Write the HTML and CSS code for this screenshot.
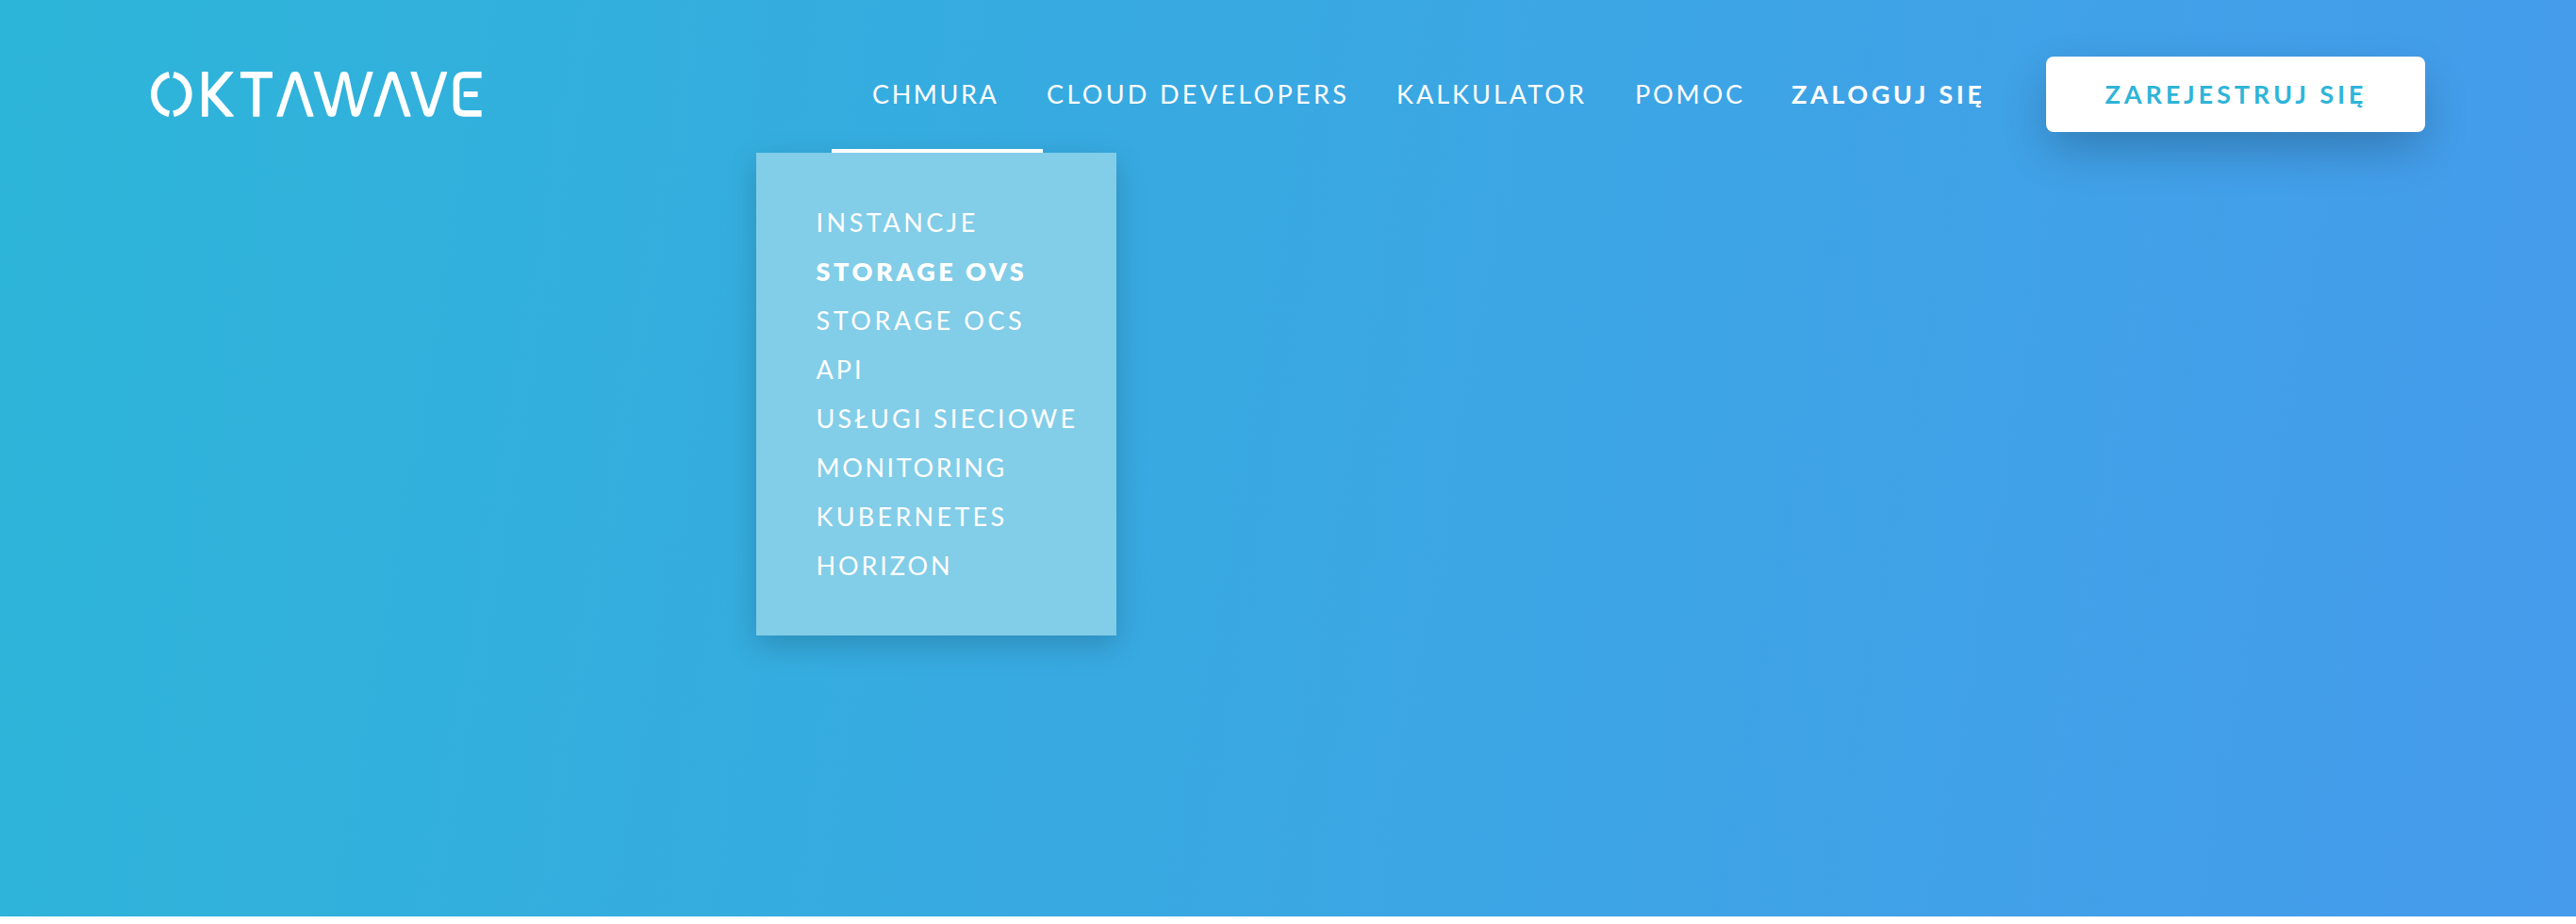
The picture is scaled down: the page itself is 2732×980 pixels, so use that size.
FILE: index.html
```html
<!DOCTYPE html>
<html lang="pl">
<head>
<meta charset="utf-8">
<title>Oktawave</title>
<link rel="stylesheet" href="styles.css">
</head>
<body>
<div class="hero">
  <header class="header">
    <a class="logo" aria-label="Oktawave">
      <svg viewBox="60 45 1056 147" width="352" height="49">
        <g fill="none" stroke="#fff" stroke-width="20">
          <path d="M118 58C90 64 70 89 70 120S90 176 118 182M132 58C161 64 181 89 181 120S161 176 132 182"/>
          <path d="M1112 58H1058Q1032 58 1032 84V155Q1032 181 1058 181H1112"/>
        </g>
        <g fill="#fff" stroke="#fff" stroke-width="4" stroke-linejoin="round">
          <path d="M224 50H240V189H224zM298 50H320L265 115Q261 119 265 123L322 189H300L243 125Q238 119 243 113z"/>
          <path d="M347 50H445V66H404V189H387V66H347z"/>
          <path d="M462 189L506 58Q509 50 516 50H522Q529 50 532 58L576 189H560L522 74Q519 68 516 74L478 189z"/>
          <path d="M580 50H596L632 163Q635 169 638 163L664 58Q666 50 672 50H678Q684 50 687 58L710 163Q713 169 716 163L750 50H765L724 181Q721 189 715 189H709Q702 189 700 181L677 74Q674 68 672 74L647 181Q645 189 639 189H631Q625 189 622 181z"/>
          <path d="M771 189L815 58Q818 50 825 50H831Q838 50 841 58L885 189H869L831 74Q828 68 825 74L787 189z"/>
          <path d="M888 50H904L941 165Q944 171 947 165L985 50H1001L958 181Q955 189 948 189H940Q933 189 930 181z"/>
          <path d="M1057 113H1098V127H1057z"/>
        </g>
      </svg>
    </a>
    <nav class="nav">
      <div class="nav-item nav-item-open">
        <a class="nav-link chmura">CHMURA</a>
        <ul class="dropdown">
          <li class="instancje">INSTANCJE</li>
          <li class="ovs">STORAGE OVS</li>
          <li class="ocs">STORAGE OCS</li>
          <li class="api">API</li>
          <li class="sieciowe">USŁUGI SIECIOWE</li>
          <li class="monitoring">MONITORING</li>
          <li class="kubernetes">KUBERNETES</li>
          <li class="horizon">HORIZON</li>
        </ul>
      </div>
      <a class="nav-link developers">CLOUD DEVELOPERS</a>
      <a class="nav-link kalkulator">KALKULATOR</a>
      <a class="nav-link pomoc">POMOC</a>
      <a class="nav-link login">ZALOGUJ SIĘ</a>
      <a class="button">ZAREJESTRUJ SIĘ</a>
    </nav>
  </header>
</div>
</body>
</html>
```
FILE: styles.css
```css
* { box-sizing: border-box; }

body {
  margin: 0;
  background: #fff;
  color: #fff;
  font-family: Lato, "Open Sans", sans-serif;
  font-size: 27px;
}

.hero {
  height: 972px;
  background: linear-gradient(100deg, #2db5d9 0%, #469bec 100%);
}

.header {
  display: flex;
  justify-content: space-between;
  align-items: flex-start;
  padding: 60px 160px 0;
}

.logo { padding-top: 15px; }

.logo svg { display: block; }

.nav {
  display: grid;
  grid-template-columns: 185px 371px 253px 166px 270px 402px;
  height: 80px;
  line-height: 80px;
  white-space: nowrap;
}

.nav-item { position: relative; }

.nav-item-open::after {
  content: "";
  position: absolute;
  top: 98px;
  left: -43px;
  width: 224px;
  height: 4px;
  background: #fff;
}

.chmura { letter-spacing: 2.6px; }
.developers { letter-spacing: 3.34px; }
.kalkulator { letter-spacing: 3.03px; }
.pomoc { letter-spacing: 2.87px; }
.login { letter-spacing: 3.6px; font-weight: 700; }

.button {
  padding-left: 62.5px;
  border-radius: 8px;
  background: #fff;
  color: #2fb4d9;
  font-weight: 700;
  letter-spacing: 3.9px;
  box-shadow: 0 20px 50px -4px rgba(0, 0, 0, .24);
}

.dropdown {
  position: absolute;
  top: 102px;
  left: -123px;
  width: 382px;
  margin: 0;
  padding: 48px 0 48px 63.5px;
  list-style: none;
  line-height: 52px;
  background: #82cde8;
  box-shadow: 0 10px 30px rgba(0, 0, 0, .18);
}

.instancje { letter-spacing: 3.5px; }
.ovs { letter-spacing: 3.5px; font-weight: 800; }
.ocs { letter-spacing: 3.56px; }
.api { letter-spacing: 3px; }
.sieciowe { letter-spacing: 3.19px; }
.monitoring { letter-spacing: 2.6px; }
.kubernetes { letter-spacing: 3.28px; }
.horizon { letter-spacing: 2.9px; }
```
